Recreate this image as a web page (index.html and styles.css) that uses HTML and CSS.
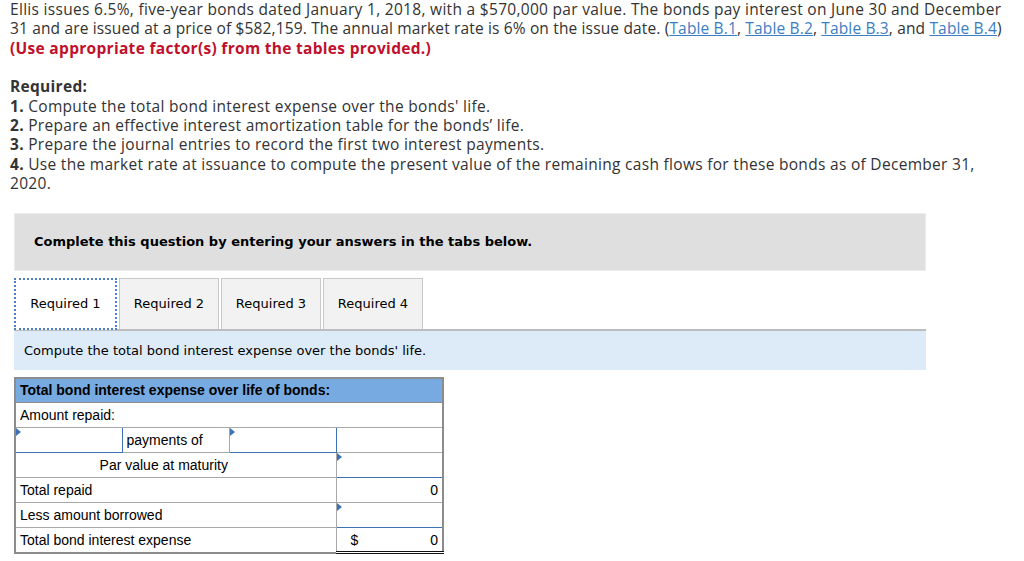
FILE: index.html
```html
<!DOCTYPE html>
<html lang="en">

<head>
    <meta charset="UTF-8">
    <title>Bonds question</title>
    <link rel="stylesheet" href="styles.css">
</head>

<body>
    <div class="question">
        <p>Ellis issues 6.5%, five-year bonds dated January 1, 2018, with a $570,000 par value. The bonds pay interest on June 30 and December<br>
            <span class="tight">31 and are issued at a price of $582,159. The annual market rate is 6% on the issue date. (<a href="#">Table B.1</a>, <a href="#">Table B.2</a>, <a href="#">Table B.3</a>, and <a href="#">Table B.4</a>)</span><br>
            <strong class="red">(Use appropriate factor(s) from the tables provided.)</strong></p>

        <p><strong>Required:</strong><br>
            <strong>1.</strong> Compute the total bond interest expense over the bonds' life.<br>
            <strong>2.</strong> Prepare an effective interest amortization table for the bonds’ life.<br>
            <strong>3.</strong> Prepare the journal entries to record the first two interest payments.<br>
            <strong>4.</strong> Use the market rate at issuance to compute the present value of the remaining cash flows for these bonds as of December 31,<br>
            2020.</p>
    </div>

    <div class="widget">
        <div class="banner">Complete this question by entering your answers in the tabs below.</div>

        <div class="tabs">
            <div class="tab active">Required 1</div>
            <div class="tab">Required 2</div>
            <div class="tab">Required 3</div>
            <div class="tab">Required 4</div>
        </div>

        <div class="instruction">Compute the total bond interest expense over the bonds' life.</div>

        <table class="answer">
            <tr>
                <th colspan="4">Total bond interest expense over life of bonds:</th>
            </tr>
            <tr>
                <td colspan="4">Amount repaid:</td>
            </tr>
            <tr>
                <td class="input"><span class="flag"></span></td>
                <td>payments of</td>
                <td class="input"><span class="flag"></span></td>
                <td></td>
            </tr>
            <tr>
                <td colspan="3" class="center">Par value at maturity</td>
                <td class="input"><span class="flag"></span></td>
            </tr>
            <tr>
                <td colspan="3">Total repaid</td>
                <td class="num total-top">0</td>
            </tr>
            <tr>
                <td colspan="3">Less amount borrowed</td>
                <td class="input"><span class="flag"></span></td>
            </tr>
            <tr>
                <td colspan="3">Total bond interest expense</td>
                <td class="num double"><span class="dollar">$</span>0</td>
            </tr>
        </table>
    </div>
</body>

</html>
```

FILE: styles.css
```css
* {
    box-sizing: border-box;
}

body {
    margin: 0;
    padding: 0 10px;
    color: #333;
    font-family: "Open Sans", sans-serif;
}

.question p {
    margin: 0 0 19px;
    font-size: 15.5px;
    line-height: 19.4px;
    letter-spacing: 0.3px;
    white-space: nowrap;
}

.question .tight {
    letter-spacing: 0.15px;
}

.question strong {
    font-weight: 700;
}

.question a {
    color: #3c7dc4;
}

.red {
    color: #c0102b;
}

.widget {
    margin: 6px 0 0 4px;
    width: 912px;
}

.banner {
    background: #dfdfdf;
    border: 1px solid #ececec;
    height: 58px;
    padding: 0 19px;
    display: flex;
    align-items: center;
    font-family: "DejaVu Sans", Verdana, sans-serif;
    font-size: 13px;
    font-weight: bold;
    color: #000;
}

.tabs {
    display: flex;
    gap: 2px;
    margin-top: 7px;
}

.tab {
    width: 100px;
    height: 51px;
    display: flex;
    align-items: center;
    justify-content: center;
    background: #f2f2f2;
    border: 1px solid #c8c8c8;
    border-bottom: none;
    font-family: "DejaVu Sans", Verdana, sans-serif;
    font-size: 13px;
    color: #000;
}

.tab.active {
    width: 103px;
    background: #fff;
    border: 2px dotted #4a7fc1;
    height: 52px;
    margin-bottom: -1px;
    position: relative;
}

.instruction {
    background: #dcebf7;
    border-top: 2px solid #bdbdbd;
    height: 41px;
    padding: 0 10px;
    display: flex;
    align-items: center;
    font-family: "DejaVu Sans", Verdana, sans-serif;
    font-size: 13px;
    color: #000;
}

.answer {
    margin-top: 7px;
    width: 430px;
    border-collapse: collapse;
    border: 2px solid #8c8c8c;
    font-family: "Liberation Sans", Arial, sans-serif;
    font-size: 14px;
    color: #000;
    table-layout: fixed;
}

.answer th {
    background: #77aae0;
    text-align: left;
    height: 25px;
    padding: 0 4px;
    border-bottom: 1px solid #8c8c8c;
}

.answer td {
    height: 25px;
    padding: 0 4px;
    border: 1px solid #a8a8a8;
    width: 25%;
}

.answer .center {
    text-align: center;
    padding-right: 28px;
}

.answer .num {
    text-align: right;
}

.answer .input {
    border: 1px solid #3d72b5;
    position: relative;
    padding: 0;
}

.flag {
    position: absolute;
    left: 0;
    top: 0;
    border-top: 4px solid transparent;
    border-bottom: 4px solid transparent;
    border-left: 5px solid #3d72b5;
}

.total-top {
    border-top: 1px solid #333 !important;
}

.double {
    border-bottom: 3px double #111 !important;
}

.dollar {
    float: left;
    padding-left: 10px;
}
```
